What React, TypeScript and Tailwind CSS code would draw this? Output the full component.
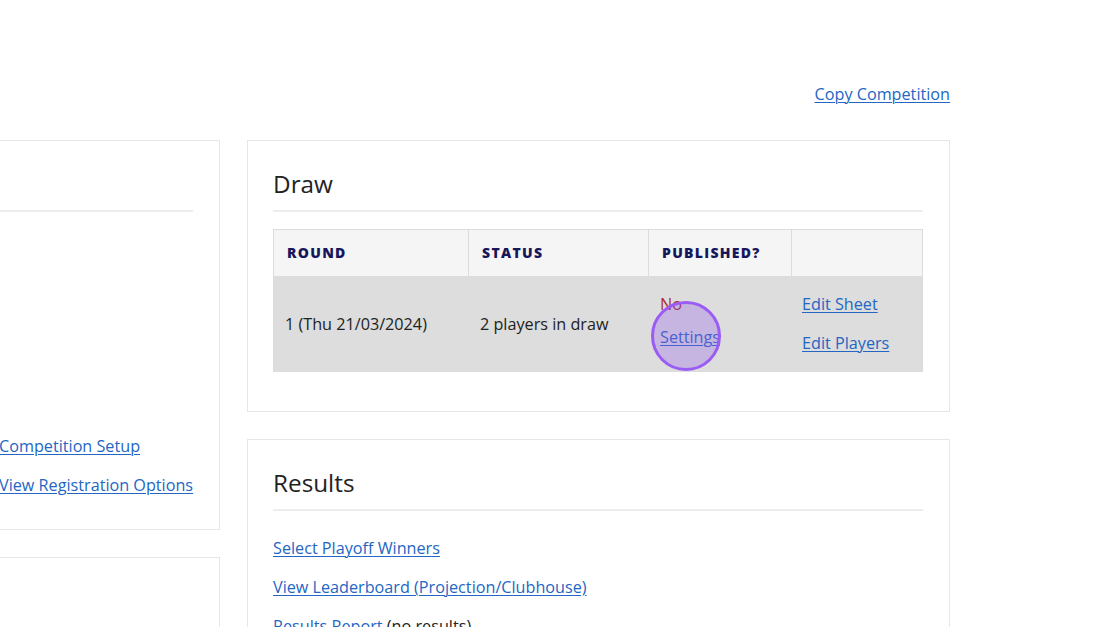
import React from "react";

const link = "text-[#2366c4] underline underline-offset-2 decoration-1";

function Panel({ title, children, className = "" }: { title?: string; children?: React.ReactNode; className?: string }) {
  return (
    <div className={`border border-[#e6e6e6] bg-white pl-[25px] pr-[26px] pt-[27px] ${className}`}>
      <h2 className="text-[24.3px] leading-[32px] h-[32px] mb-[10px] text-[#222] font-normal">{title}</h2>
      <div className="h-[2px] bg-[#ededed]" />
      {children}
    </div>
  );
}

export default function App() {
  const cols = "grid grid-cols-[195px_180px_143px_130px]";
  const th = "flex items-center pl-[13px] text-[14px] font-extrabold tracking-[1.3px] text-[#16165c]";
  return (
    <div className="relative w-[1120px] h-[627px] overflow-hidden bg-white font-['Open_Sans',sans-serif] text-[16.2px] leading-[24px] text-[#222]">
      <div className="w-[950px] h-[140px] flex justify-end pt-[82px]">
        <a href="#" className={link}>Copy Competition</a>
      </div>
      <div className="flex gap-[27px] ml-[-27px]">
        <div className="w-[247px] shrink-0 flex flex-col gap-[27px] whitespace-nowrap">
          <Panel className="pb-[32px]">
            <div className="mt-[222px] flex flex-col gap-[15px]">
              <a href="#" className={link}>Competition Setup</a>
              <a href="#" className={link}>View Registration Options</a>
            </div>
          </Panel>
          <Panel className="h-[200px]" />
        </div>
        <div className="w-[703px] shrink-0 flex flex-col gap-[27px]">
          <Panel title="Draw" className="pb-[39px]">
            <div className="mt-[17px] border border-[#dcdcdc]">
              <div className={`${cols} h-[47px] bg-[#f5f5f5] border-b border-[#dcdcdc]`}>
                <div className={`${th} border-r border-[#dcdcdc]`}>ROUND</div>
                <div className={`${th} border-r border-[#dcdcdc]`}>STATUS</div>
                <div className={`${th} border-r border-[#dcdcdc]`}>PUBLISHED?</div>
                <div />
              </div>
              <div className={`${cols} h-[94px] bg-[#dcdddc]`}>
                <div className="flex items-center pl-[11px]">1 (Thu 21/03/2024)</div>
                <div className="flex items-center pl-[11px]">2 players in draw</div>
                <div className="flex flex-col items-start pl-[11px] pt-[15px] gap-[9px]">
                  <span className="text-[#a82c2c]">No</span>
                  <a href="#" className={link}>Settings</a>
                </div>
                <div className="flex flex-col items-start pl-[10px] pt-[15px] gap-[15px]">
                  <a href="#" className={link}>Edit Sheet</a>
                  <a href="#" className={link}>Edit Players</a>
                </div>
              </div>
            </div>
          </Panel>
          <Panel title="Results" className="h-[300px]">
            <div className="mt-[25px] flex flex-col items-start gap-[15px]">
              <a href="#" className={link}>Select Playoff Winners</a>
              <a href="#" className={link}>View Leaderboard (Projection/Clubhouse)</a>
              <span>
                <a href="#" className={link}>Results Report</a> (no results)
              </span>
            </div>
          </Panel>
        </div>
      </div>
      <div className="absolute left-[651px] top-[301px] w-[70px] h-[70px] rounded-full border-[3px] border-[#9b5cf6] bg-[rgba(150,90,240,0.3)]" />
    </div>
  );
}
